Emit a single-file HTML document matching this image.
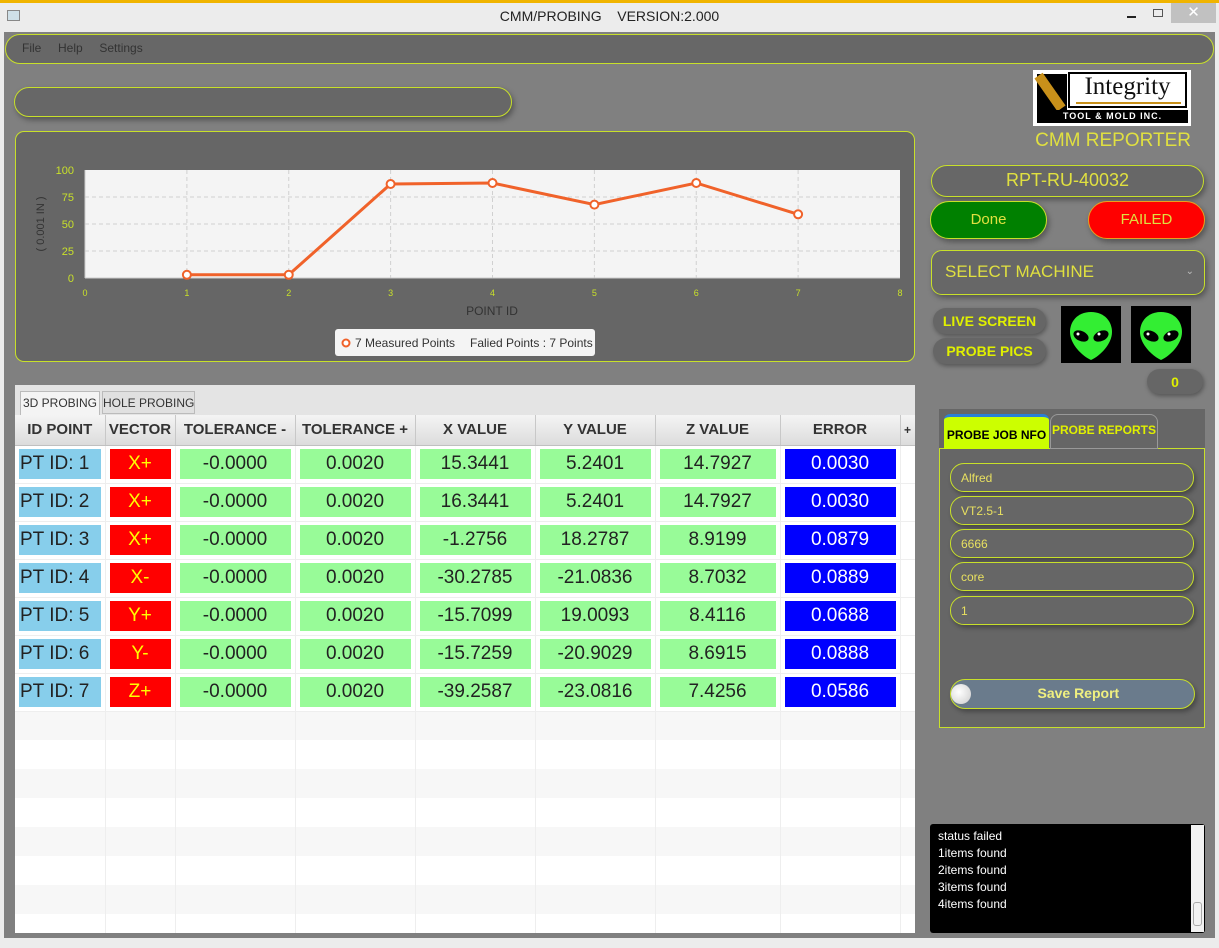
<!DOCTYPE html>
<html><head><meta charset="utf-8"><style>
*{box-sizing:border-box;margin:0;padding:0}
body{width:1219px;height:948px;background:#808080;font-family:"Liberation Sans",sans-serif;position:relative;overflow:hidden}
.a{position:absolute}
.pill{position:absolute;background:#676767;border:1.5px solid #c8e02a;border-radius:16px;box-shadow:2px 3px 6px rgba(0,0,0,.35)}
table{border-collapse:collapse;table-layout:fixed}
td,th{padding:0}
.c{display:flex;align-items:center;justify-content:center;height:30px;margin:0 4px;font-size:19px;color:#222}
.id{background:#87ceeb;justify-content:flex-start;padding-left:1px;margin-left:4px}
.v{background:#ff0000;color:#ffff00}
.g{background:#98fb98}
.e{background:#0000ff;color:#fff}
th{height:30px;font-size:15px;font-weight:bold;color:#333;background:linear-gradient(#f4f4f4,#dcdcdc);border-right:1px solid #c8c8c8;border-bottom:1px solid #c0c0c0;white-space:nowrap}
tr.r td{height:38px;border-right:1px solid #eee;border-bottom:1px solid #eee;background:#fff}
tr.em td{height:29px;border-right:1px solid #eee}
tr.em:nth-child(odd) td{background:#f7f7f7}
tr.em:nth-child(even) td{background:#fff}
.rb{position:absolute;font-weight:bold;color:#e0f000;font-size:14px;background:#666;border-radius:14px;display:flex;align-items:center;justify-content:center;box-shadow:1px 2px 5px rgba(0,0,0,.35)}
.fld{position:absolute;left:950px;width:244px;height:29px;background:#666;border:1.5px solid #c8e02a;border-radius:14px;color:#e8e060;font-size:12px;padding-left:10px;display:flex;align-items:center;box-shadow:2px 3px 5px rgba(0,0,0,.3)}
</style></head><body>
<div class="a" style="left:0;top:0;width:1219px;height:3px;background:#f0b400"></div>
<div class="a" style="left:0;top:3px;width:1219px;height:29px;background:#ececec"></div>
<div class="a" style="left:7px;top:10px;width:13px;height:11px;border:1px solid #888;background:#cfe0e8"></div>
<div class="a" style="left:0;top:8px;width:1219px;text-align:center;font-size:14px;color:#222">CMM/PROBING&nbsp;&nbsp;&nbsp; VERSION:2.000</div>
<div class="a" style="left:1127px;top:16px;width:9px;height:2px;background:#222"></div>
<div class="a" style="left:1153px;top:9px;width:10px;height:8px;border:1px solid #555"></div>
<div class="a" style="left:1171px;top:3px;width:45px;height:20px;background:#c1c1c1;color:#fff;font-size:15px;text-align:center;line-height:20px">✕</div>
<div class="a" style="left:0;top:32px;width:4px;height:916px;background:#ececec"></div>
<div class="a" style="left:1215px;top:32px;width:4px;height:916px;background:#ececec"></div>
<div class="a" style="left:0;top:938px;width:1219px;height:10px;background:#ececec"></div>
<div class="pill" style="left:5px;top:34px;width:1209px;height:30px;border-radius:15px;box-shadow:none"></div>
<div class="a" style="left:22px;top:41px;font-size:12px;color:#333">File&nbsp;&nbsp;&nbsp;&nbsp; Help&nbsp;&nbsp;&nbsp;&nbsp; Settings</div>
<div class="pill" style="left:14px;top:87px;width:498px;height:30px"></div>
<div class="a" style="left:15px;top:131px;width:900px;height:231px;background:#666;border:1.5px solid #c8e02a;border-radius:9px"></div>
<svg class="a" style="left:0;top:0" width="920" height="370">
<rect x="85" y="170" width="815" height="108" fill="#f4f4f4"/>
<g stroke="#d0d0d0" stroke-dasharray="4,3" stroke-width="1">
<line x1="85" y1="197" x2="900" y2="197"/><line x1="85" y1="224" x2="900" y2="224"/><line x1="85" y1="251" x2="900" y2="251"/>
<line x1="186.9" y1="170" x2="186.9" y2="278"/><line x1="288.75" y1="170" x2="288.75" y2="278"/><line x1="390.6" y1="170" x2="390.6" y2="278"/><line x1="492.5" y1="170" x2="492.5" y2="278"/><line x1="594.4" y1="170" x2="594.4" y2="278"/><line x1="696.25" y1="170" x2="696.25" y2="278"/><line x1="798.1" y1="170" x2="798.1" y2="278"/>
</g>
<line x1="85" y1="278" x2="900" y2="278" stroke="#ccc"/><line x1="85" y1="170" x2="85" y2="278" stroke="#ccc"/>
<g font-size="11" fill="#c8e02a" text-anchor="end" font-family="Liberation Sans">
<text x="74" y="174">100</text><text x="74" y="201">75</text><text x="74" y="228">50</text><text x="74" y="255">25</text><text x="74" y="282">0</text></g>
<g font-size="9" fill="#c8e02a" text-anchor="middle" font-family="Liberation Sans">
<text x="85" y="296">0</text><text x="186.9" y="296">1</text><text x="288.75" y="296">2</text><text x="390.6" y="296">3</text><text x="492.5" y="296">4</text><text x="594.4" y="296">5</text><text x="696.25" y="296">6</text><text x="798.1" y="296">7</text><text x="900" y="296">8</text></g>
<text x="492" y="315" font-size="12" fill="#333" text-anchor="middle" font-family="Liberation Sans">POINT ID</text>
<text transform="translate(44,224) rotate(-90)" font-size="11" fill="#333" text-anchor="middle" font-family="Liberation Sans">( 0.001 IN )</text>
<polyline points="186.9,274.8 288.75,274.8 390.6,184 492.5,183 594.4,204.6 696.25,183 798.1,214.3" fill="none" stroke="#f0622a" stroke-width="3"/>
<g fill="#fff" stroke="#f0622a" stroke-width="2">
<circle cx="186.9" cy="274.8" r="4"/><circle cx="288.75" cy="274.8" r="4"/><circle cx="390.6" cy="184" r="4"/><circle cx="492.5" cy="183" r="4"/><circle cx="594.4" cy="204.6" r="4"/><circle cx="696.25" cy="183" r="4"/><circle cx="798.1" cy="214.3" r="4"/></g>
<rect x="335" y="329" width="260" height="27" rx="3" fill="#f4f4f4"/>
<circle cx="346" cy="343" r="3.5" fill="#fff" stroke="#f0622a" stroke-width="2"/>
<text x="355" y="347" font-size="12" fill="#333" font-family="Liberation Sans">7 Measured Points</text>
<text x="470" y="347" font-size="12" fill="#333" font-family="Liberation Sans">Falied Points : 7 Points</text>
</svg>
<div class="a" style="left:15px;top:385px;width:900px;height:548px;background:#fff;overflow:hidden">
<div class="a" style="left:0;top:0;width:900px;height:30px;background:#e4e4e4"></div>
<div class="a" style="left:5px;top:6px;width:80px;height:24px;background:#f4f4f4;border:1px solid #bbb;border-bottom:none;font-size:12px;color:#333;text-align:center;line-height:23px;white-space:nowrap">3D PROBING</div>
<div class="a" style="left:87px;top:6px;width:93px;height:23px;background:#e0e0e0;border:1px solid #bbb;font-size:12px;color:#333;text-align:center;line-height:22px;white-space:nowrap">HOLE PROBING</div>
<table class="a" style="left:0;top:30px;width:900px">
<colgroup><col style="width:90px"><col style="width:70px"><col style="width:120px"><col style="width:120px"><col style="width:120px"><col style="width:120px"><col style="width:125px"><col style="width:120px"><col style="width:15px"></colgroup>
<tr><th>ID POINT</th><th>VECTOR</th><th>TOLERANCE -</th><th>TOLERANCE +</th><th>X VALUE</th><th>Y VALUE</th><th>Z VALUE</th><th>ERROR</th><th style="font-size:12px">+</th></tr>
<tr class="r"><td><div class="c id">PT ID: 1</div></td><td><div class="c v">X+</div></td><td><div class="c g">-0.0000</div></td><td><div class="c g">0.0020</div></td><td><div class="c g">15.3441</div></td><td><div class="c g">5.2401</div></td><td><div class="c g">14.7927</div></td><td><div class="c e">0.0030</div></td><td></td></tr>
<tr class="r"><td><div class="c id">PT ID: 2</div></td><td><div class="c v">X+</div></td><td><div class="c g">-0.0000</div></td><td><div class="c g">0.0020</div></td><td><div class="c g">16.3441</div></td><td><div class="c g">5.2401</div></td><td><div class="c g">14.7927</div></td><td><div class="c e">0.0030</div></td><td></td></tr>
<tr class="r"><td><div class="c id">PT ID: 3</div></td><td><div class="c v">X+</div></td><td><div class="c g">-0.0000</div></td><td><div class="c g">0.0020</div></td><td><div class="c g">-1.2756</div></td><td><div class="c g">18.2787</div></td><td><div class="c g">8.9199</div></td><td><div class="c e">0.0879</div></td><td></td></tr>
<tr class="r"><td><div class="c id">PT ID: 4</div></td><td><div class="c v">X-</div></td><td><div class="c g">-0.0000</div></td><td><div class="c g">0.0020</div></td><td><div class="c g">-30.2785</div></td><td><div class="c g">-21.0836</div></td><td><div class="c g">8.7032</div></td><td><div class="c e">0.0889</div></td><td></td></tr>
<tr class="r"><td><div class="c id">PT ID: 5</div></td><td><div class="c v">Y+</div></td><td><div class="c g">-0.0000</div></td><td><div class="c g">0.0020</div></td><td><div class="c g">-15.7099</div></td><td><div class="c g">19.0093</div></td><td><div class="c g">8.4116</div></td><td><div class="c e">0.0688</div></td><td></td></tr>
<tr class="r"><td><div class="c id">PT ID: 6</div></td><td><div class="c v">Y-</div></td><td><div class="c g">-0.0000</div></td><td><div class="c g">0.0020</div></td><td><div class="c g">-15.7259</div></td><td><div class="c g">-20.9029</div></td><td><div class="c g">8.6915</div></td><td><div class="c e">0.0888</div></td><td></td></tr>
<tr class="r"><td><div class="c id">PT ID: 7</div></td><td><div class="c v">Z+</div></td><td><div class="c g">-0.0000</div></td><td><div class="c g">0.0020</div></td><td><div class="c g">-39.2587</div></td><td><div class="c g">-23.0816</div></td><td><div class="c g">7.4256</div></td><td><div class="c e">0.0586</div></td><td></td></tr>
<tr class="em"><td></td><td></td><td></td><td></td><td></td><td></td><td></td><td></td><td></td></tr>
<tr class="em"><td></td><td></td><td></td><td></td><td></td><td></td><td></td><td></td><td></td></tr>
<tr class="em"><td></td><td></td><td></td><td></td><td></td><td></td><td></td><td></td><td></td></tr>
<tr class="em"><td></td><td></td><td></td><td></td><td></td><td></td><td></td><td></td><td></td></tr>
<tr class="em"><td></td><td></td><td></td><td></td><td></td><td></td><td></td><td></td><td></td></tr>
<tr class="em"><td></td><td></td><td></td><td></td><td></td><td></td><td></td><td></td><td></td></tr>
<tr class="em"><td></td><td></td><td></td><td></td><td></td><td></td><td></td><td></td><td></td></tr>
<tr class="em"><td></td><td></td><td></td><td></td><td></td><td></td><td></td><td></td><td></td></tr>
</table>
</div>
<div class="a" style="left:1033px;top:70px;width:158px;height:56px;background:#fff"></div>
<div class="a" style="left:1037px;top:74px;width:30px;height:36px;background:#000"></div>
<div class="a" style="left:1045px;top:72px;width:10px;height:40px;background:#c8901a;transform:rotate(-35deg)"></div>
<div class="a" style="left:1068px;top:72px;width:119px;height:36px;border:2px solid #000"></div>
<div class="a" style="left:1070px;top:73px;width:115px;text-align:center;font-family:'Liberation Serif',serif;font-size:25px;color:#111">Integrity</div>
<div class="a" style="left:1076px;top:102px;width:105px;height:2px;background:#c8901a"></div>
<div class="a" style="left:1037px;top:110px;width:151px;height:13px;background:#000;color:#fff;font-size:9px;font-weight:bold;text-align:center;line-height:13px;letter-spacing:1px">TOOL &amp; MOLD INC.</div>
<div class="a" style="left:1030px;top:130px;width:161px;text-align:right;font-size:19px;color:#e0e040">CMM REPORTER</div>
<div class="pill" style="left:931px;top:165px;width:273px;height:32px;color:#e0e040;font-size:18px;text-align:center;line-height:29px">RPT-RU-40032</div>
<div class="pill" style="left:930px;top:201px;width:117px;height:38px;border-radius:19px;background:#008000;color:#e0e040;font-size:15px;text-align:center;line-height:35px">Done</div>
<div class="pill" style="left:1088px;top:201px;width:117px;height:38px;border-radius:19px;background:#ff0000;border-color:#e8a020;color:#e0e040;font-size:15px;text-align:center;line-height:35px">FAILED</div>
<div class="pill" style="left:931px;top:250px;width:274px;height:45px;border-radius:11px;color:#e0e040;font-size:17px;line-height:42px;padding-left:13px">SELECT MACHINE<span style="position:absolute;right:10px;font-size:10px;color:#bbb">⌄</span></div>
<div class="rb" style="left:933px;top:308px;width:113px;height:26px">LIVE SCREEN</div>
<div class="rb" style="left:933px;top:338px;width:113px;height:26px">PROBE PICS</div>
<svg class="a" style="left:1061px;top:306px" width="60" height="57"><rect width="60" height="57" fill="#000"/><path d="M30 6C16 6 9 16 9 26c0 12 12 24 21 28c9-4 21-16 21-28C51 16 44 6 30 6z" fill="#33ee33"/><ellipse cx="20" cy="30" rx="8" ry="5" transform="rotate(25 20 30)" fill="#000"/><ellipse cx="40" cy="30" rx="8" ry="5" transform="rotate(-25 40 30)" fill="#000"/><circle cx="17" cy="28" r="1.5" fill="#fff"/><circle cx="38" cy="28" r="1.5" fill="#fff"/></svg>
<svg class="a" style="left:1131px;top:306px" width="60" height="57"><rect width="60" height="57" fill="#000"/><path d="M30 6C16 6 9 16 9 26c0 12 12 24 21 28c9-4 21-16 21-28C51 16 44 6 30 6z" fill="#33ee33"/><ellipse cx="20" cy="30" rx="8" ry="5" transform="rotate(25 20 30)" fill="#000"/><ellipse cx="40" cy="30" rx="8" ry="5" transform="rotate(-25 40 30)" fill="#000"/><circle cx="17" cy="28" r="1.5" fill="#fff"/><circle cx="38" cy="28" r="1.5" fill="#fff"/></svg>
<div class="rb" style="left:1147px;top:369px;width:56px;height:25px">0</div>
<div class="a" style="left:939px;top:409px;width:266px;height:40px;background:#666"></div>
<div class="a" style="left:939px;top:448px;width:266px;height:280px;background:#666;border:1px solid #c8e02a"></div>
<div class="a" style="left:944px;top:414px;width:105px;height:35px;background:#ccff00;border-radius:6px 6px 0 0;border-top:3px solid #2a7fd4;color:#000;font-weight:bold;font-size:12px;text-align:center;line-height:36px;white-space:nowrap">PROBE JOB NFO</div>
<div class="a" style="left:1050px;top:414px;width:108px;height:35px;border:1px solid #999;border-radius:8px 8px 0 0;color:#e0f000;font-weight:bold;font-size:12px;text-align:center;line-height:31px;white-space:nowrap">PROBE REPORTS</div>
<div class="fld" style="top:463px">Alfred</div>
<div class="fld" style="top:496px">VT2.5-1</div>
<div class="fld" style="top:529px">6666</div>
<div class="fld" style="top:562px">core</div>
<div class="fld" style="top:596px">1</div>
<div class="a" style="left:950px;top:679px;width:245px;height:30px;background:#6a7b8c;border:1.5px solid #c8e02a;border-radius:15px;color:#f0f080;font-weight:bold;font-size:14px;text-align:center;line-height:27px;box-shadow:2px 3px 5px rgba(0,0,0,.3)">&nbsp;&nbsp;&nbsp;Save Report</div>
<div class="a" style="left:951px;top:684px;width:20px;height:20px;border-radius:50%;background:radial-gradient(circle at 40% 40%,#fff,#ccc)"></div>
<div class="a" style="left:930px;top:824px;width:275px;height:109px;background:#000;border-radius:3px"></div>
<div class="a" style="left:1191px;top:825px;width:13px;height:107px;background:#f2f2f2"></div>
<div class="a" style="left:1193px;top:902px;width:9px;height:24px;border:1px solid #aaa;border-radius:3px"></div>
<div class="a" style="left:938px;top:828px;color:#fff;font-size:12px;line-height:17px">status failed<br>1items found<br>2items found<br>3items found<br>4items found</div>
</body></html>
